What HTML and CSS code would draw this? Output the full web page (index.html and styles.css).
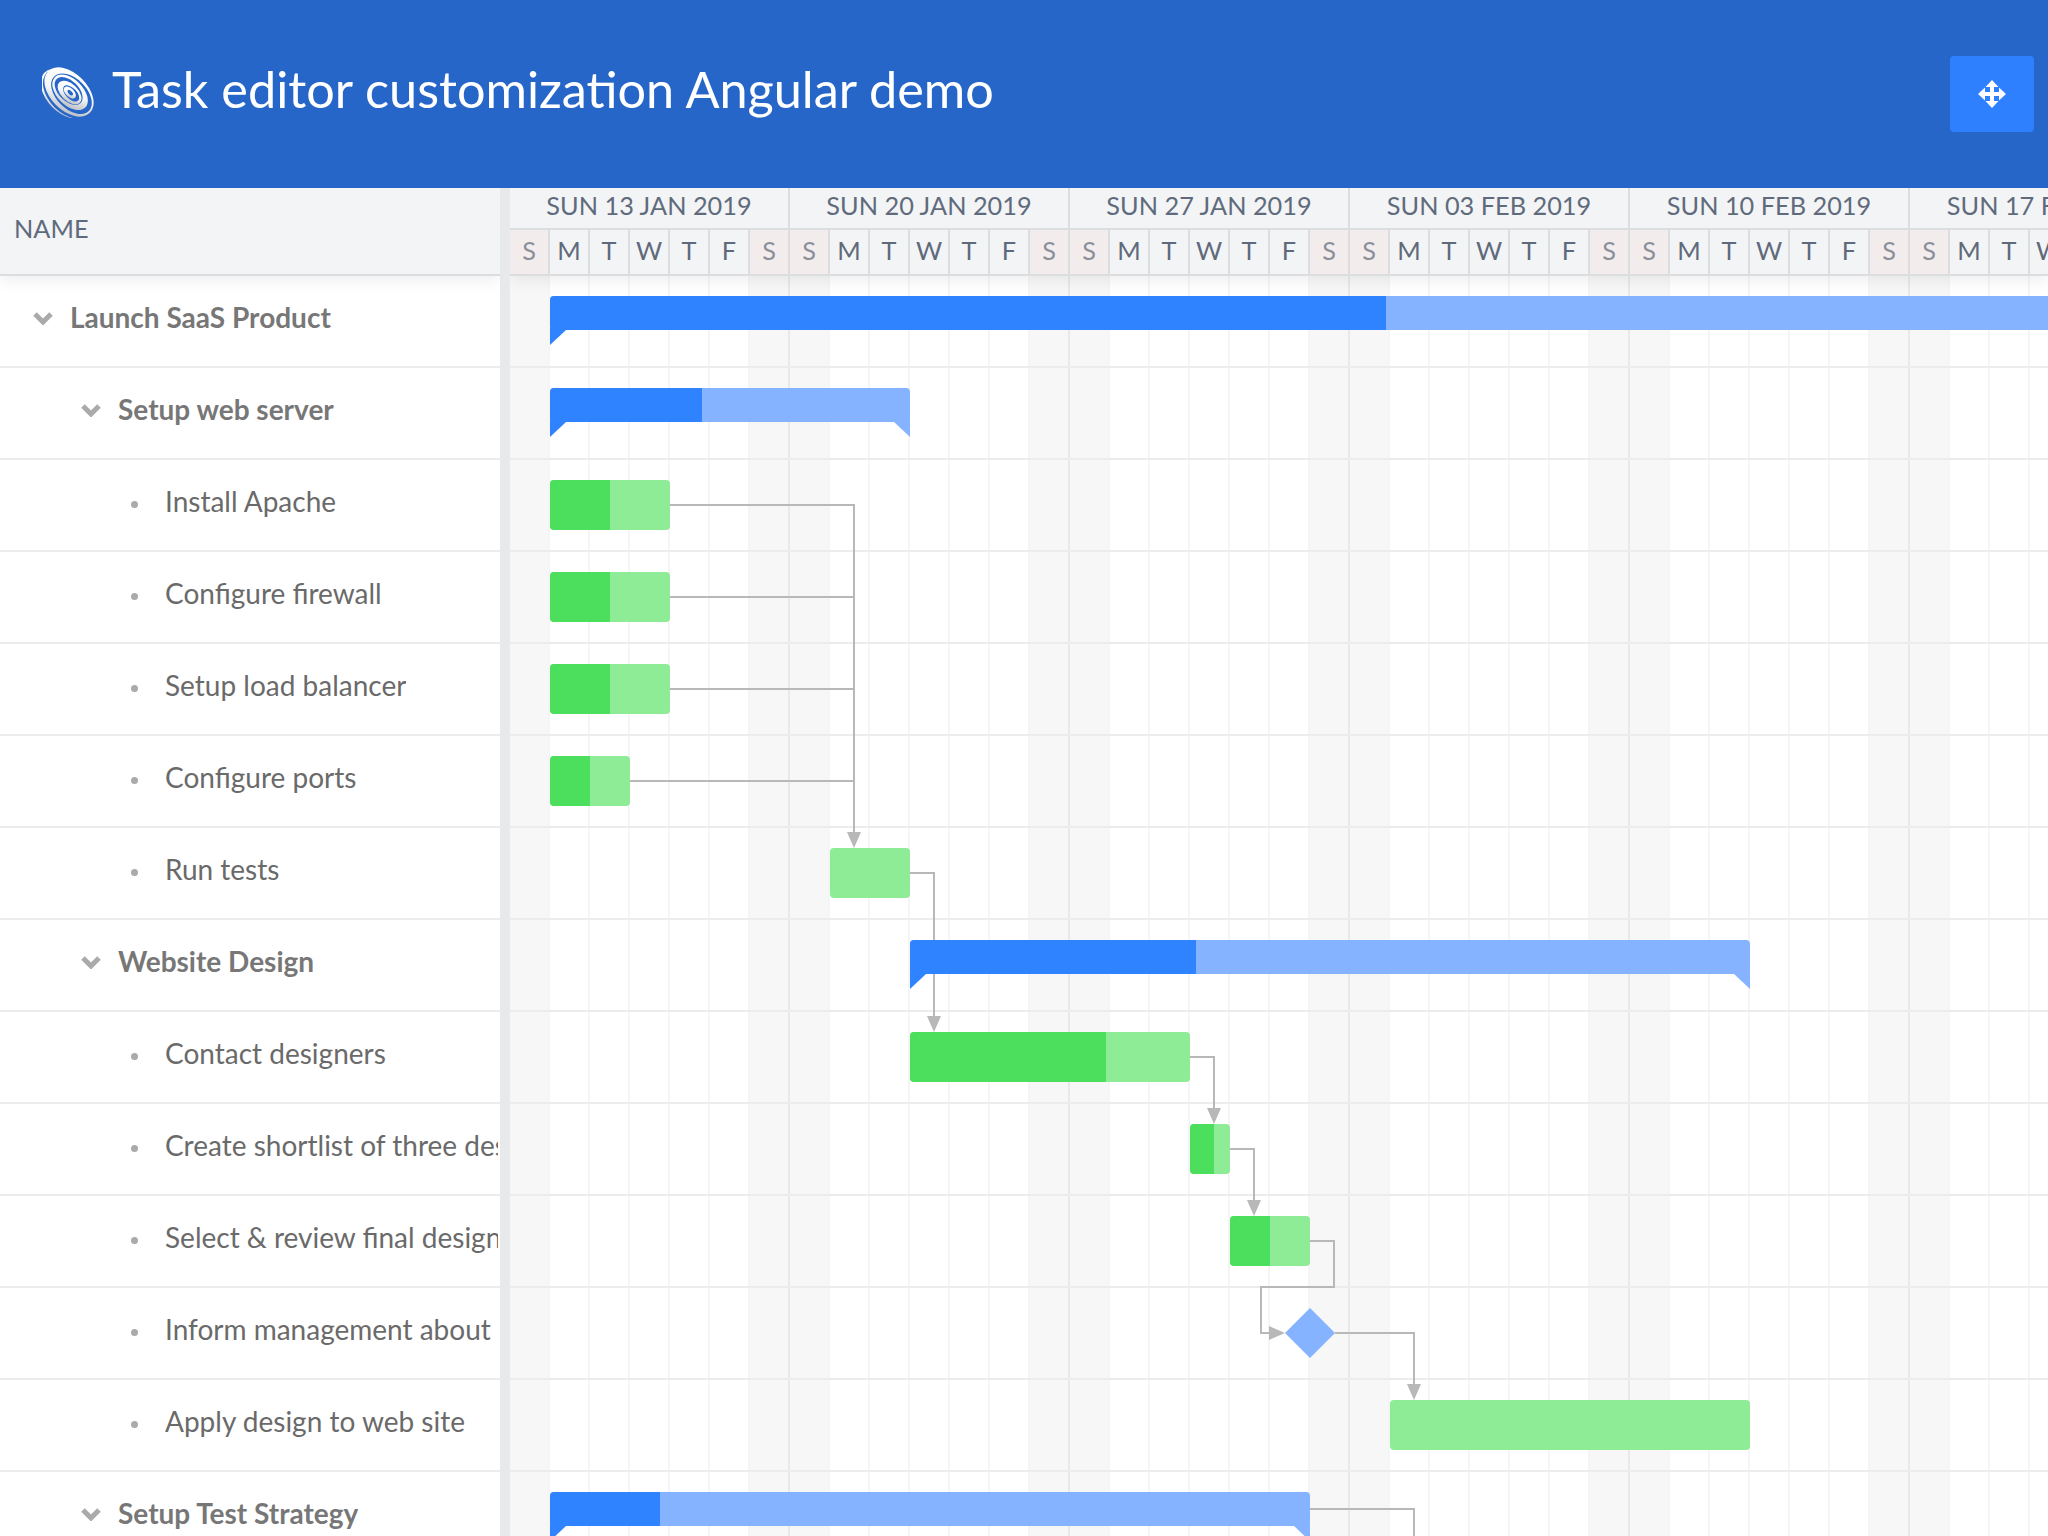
FILE: index.html
```html
<!DOCTYPE html>
<html lang="en">
<head>
<meta charset="utf-8">
<title>Task editor customization Angular demo</title>
<link rel="stylesheet" href="styles.css">
</head>
<body>
<header class="app-header">
  <svg class="logo" viewBox="0 0 54 52" aria-hidden="true">
    <defs>
      <linearGradient id="lg" x1="0.15" y1="0.1" x2="0.8" y2="0.95">
        <stop offset="0" stop-color="#ffffff"/>
        <stop offset="0.55" stop-color="#f4f5f6"/>
        <stop offset="1" stop-color="#b9bcc2"/>
      </linearGradient>
    </defs>
    <g transform="rotate(45 27 26)">
      <ellipse cx="26" cy="29.500" rx="30" ry="19" fill="url(#lg)"/>
      <ellipse cx="27.500" cy="27.500" rx="30" ry="19.500" fill="#2566c8"/>
      <ellipse cx="27" cy="26" rx="29.500" ry="18.500" fill="url(#lg)"/>
      <ellipse cx="30" cy="25.500" rx="24.500" ry="15" fill="#2566c8"/>
      <ellipse cx="28" cy="25.500" rx="21.500" ry="13" fill="url(#lg)"/>
      <ellipse cx="26" cy="25.500" rx="17" ry="10" fill="#2566c8"/>
      <ellipse cx="27.800" cy="26" rx="14.500" ry="8.500" fill="url(#lg)"/>
      <ellipse cx="29.500" cy="25.500" rx="10" ry="5.500" fill="#2566c8"/>
      <ellipse cx="28" cy="25.800" rx="7.500" ry="4.200" fill="url(#lg)"/>
      <ellipse cx="28.400" cy="25.600" rx="3.400" ry="1.800" fill="#2566c8"/>
    </g>
  </svg>
  <h1 class="app-title">Task editor customization Angular demo</h1>
  <button class="move-btn" type="button" aria-label="Move">
    <svg class="move-icon" viewBox="0 0 28 28" aria-hidden="true">
      <path d="M14 0 20.5 7H16V12H21V7.5L28 14 21 20.500V16H16V21H20.500L14 28 7.500 21H12V16H7V20.500L0 14 7 7.500V12H12V7H7.500Z"/>
    </svg>
  </button>
</header>

<main class="gantt">
  <section class="tree">
    <div class="col-head">NAME</div>
    <div class="tree-row level-0"><svg class="chev" viewBox="0 0 22 14"><path d="M3 3 11 11 19 3"/></svg><span class="parent-name">Launch SaaS Product</span></div>
    <div class="tree-row level-1"><svg class="chev" viewBox="0 0 22 14"><path d="M3 3 11 11 19 3"/></svg><span class="parent-name">Setup web server</span></div>
    <div class="tree-row level-2"><i class="dot"></i><span>Install Apache</span></div>
    <div class="tree-row level-2"><i class="dot"></i><span>Configure firewall</span></div>
    <div class="tree-row level-2"><i class="dot"></i><span>Setup load balancer</span></div>
    <div class="tree-row level-2"><i class="dot"></i><span>Configure ports</span></div>
    <div class="tree-row level-2"><i class="dot"></i><span>Run tests</span></div>
    <div class="tree-row level-1"><svg class="chev" viewBox="0 0 22 14"><path d="M3 3 11 11 19 3"/></svg><span class="parent-name">Website Design</span></div>
    <div class="tree-row level-2"><i class="dot"></i><span>Contact designers</span></div>
    <div class="tree-row level-2"><i class="dot"></i><span>Create shortlist of three designers</span></div>
    <div class="tree-row level-2"><i class="dot"></i><span>Select &amp; review final design</span></div>
    <div class="tree-row level-2"><i class="dot"></i><span>Inform management about</span></div>
    <div class="tree-row level-2"><i class="dot"></i><span>Apply design to web site</span></div>
    <div class="tree-row level-1"><svg class="chev" viewBox="0 0 22 14"><path d="M3 3 11 11 19 3"/></svg><span class="parent-name">Setup Test Strategy</span></div>
  </section>

  <div class="splitter"></div>

  <section class="timeline">
    <div class="time-head">
      <div class="weeks">
        <div class="week">SUN 13 JAN 2019</div>
        <div class="week">SUN 20 JAN 2019</div>
        <div class="week">SUN 27 JAN 2019</div>
        <div class="week">SUN 03 FEB 2019</div>
        <div class="week">SUN 10 FEB 2019</div>
        <div class="week">SUN 17 FEB 2019</div>
      </div>
      <div class="days">
        <span class="day off">S</span><span class="day">M</span><span class="day">T</span><span class="day">W</span><span class="day">T</span><span class="day">F</span><span class="day off">S</span>
        <span class="day off">S</span><span class="day">M</span><span class="day">T</span><span class="day">W</span><span class="day">T</span><span class="day">F</span><span class="day off">S</span>
        <span class="day off">S</span><span class="day">M</span><span class="day">T</span><span class="day">W</span><span class="day">T</span><span class="day">F</span><span class="day off">S</span>
        <span class="day off">S</span><span class="day">M</span><span class="day">T</span><span class="day">W</span><span class="day">T</span><span class="day">F</span><span class="day off">S</span>
        <span class="day off">S</span><span class="day">M</span><span class="day">T</span><span class="day">W</span><span class="day">T</span><span class="day">F</span><span class="day off">S</span>
        <span class="day off">S</span><span class="day">M</span><span class="day">T</span><span class="day">W</span><span class="day">T</span><span class="day">F</span><span class="day off">S</span>
      </div>
    </div>

    <div class="time-body">
      <svg class="links" viewBox="510 276 1538 1260" aria-hidden="true">
        <g class="link-lines">
          <path d="M670 505H854V834"/>
          <path d="M670 597H854"/>
          <path d="M670 689H854"/>
          <path d="M630 781H854"/>
          <path d="M910 873H934V1018"/>
          <path d="M1190 1057H1214V1110"/>
          <path d="M1230 1149H1254V1202"/>
          <path d="M1310 1241H1334V1287H1261V1333H1271"/>
          <path d="M1335 1333H1414V1386"/>
          <path d="M1310 1509H1414V1536"/>
        </g>
        <g class="link-heads">
          <path d="M847 832H861L854 848Z"/>
          <path d="M927 1016H941L934 1032Z"/>
          <path d="M1207 1108H1221L1214 1124Z"/>
          <path d="M1247 1200H1261L1254 1216Z"/>
          <path d="M1269 1326V1340L1285 1333Z"/>
          <path d="M1407 1384H1421L1414 1400Z"/>
        </g>
      </svg>

      <div class="bar summary open-end" style="left:40px;top:20px;width:1600px"><div class="done" style="width:836px"></div></div>
      <div class="bar summary" style="left:40px;top:112px;width:360px"><div class="done" style="width:152px"></div></div>
      <div class="bar task" style="left:40px;top:204px;width:120px"><div class="done" style="width:60px"></div></div>
      <div class="bar task" style="left:40px;top:296px;width:120px"><div class="done" style="width:60px"></div></div>
      <div class="bar task" style="left:40px;top:388px;width:120px"><div class="done" style="width:60px"></div></div>
      <div class="bar task" style="left:40px;top:480px;width:80px"><div class="done" style="width:40px"></div></div>
      <div class="bar task" style="left:320px;top:572px;width:80px"></div>
      <div class="bar summary" style="left:400px;top:664px;width:840px"><div class="done" style="width:286px"></div></div>
      <div class="bar task" style="left:400px;top:756px;width:280px"><div class="done" style="width:196px"></div></div>
      <div class="bar task" style="left:680px;top:848px;width:40px"><div class="done" style="width:24px"></div></div>
      <div class="bar task" style="left:720px;top:940px;width:80px"><div class="done" style="width:40px"></div></div>
      <div class="milestone" style="left:775px;top:1032px"></div>
      <div class="bar task" style="left:880px;top:1124px;width:360px"></div>
      <div class="bar summary" style="left:40px;top:1216px;width:760px"><div class="done" style="width:110px"></div></div>
    </div>
  </section>
</main>
</body>
</html>
```
FILE: styles.css
```css
* { box-sizing: border-box; }
html, body { margin: 0; height: 100%; }
body {
  width: 2048px;
  height: 1536px;
  overflow: hidden;
  background: #fff;
  font-family: Lato, "Open Sans", sans-serif;
  font-feature-settings: "liga" 1;
  display: flex;
  flex-direction: column;
}

/* top bar */
.app-header {
  flex: none;
  height: 188px;
  background: #2566c8;
  display: flex;
  align-items: center;
  padding: 0 14px 0 42px;
}
.logo { width: 54px; height: 52px; flex: none; margin-top: -5px; }
.app-title {
  margin: -11px 0 0 16px;
  font-size: 50.4px;
  font-weight: 400;
  color: #fff;
  white-space: nowrap;
  flex: 1;
}
.move-btn {
  width: 84px;
  height: 76px;
  border: 0;
  padding: 0;
  border-radius: 4px;
  background: #2f80ff;
  display: flex;
  align-items: center;
  justify-content: center;
}
.move-icon { width: 28px; height: 28px; fill: #fff; }

/* gantt */
.gantt { flex: 1; display: flex; min-height: 0; }

.tree { flex: none; width: 500px; overflow: hidden; }
.col-head {
  position: relative;
  height: 88px;
  background: #f3f4f6;
  border-bottom: 2px solid #dcdddf;
  box-shadow: 0 6px 14px rgba(0, 0, 0, .06);
  display: flex;
  align-items: center;
  padding: 0 0 6px 14px;
  font-size: 25.3px;
  color: #5f6b7c;
}
.tree-row {
  height: 92px;
  border-bottom: 2px solid #ececec;
  display: flex;
  align-items: center;
  font-size: 28px;
  color: #6a6a6a;
  white-space: nowrap;
  padding: 0 2px 8px 0;
}
.tree-row span { overflow: hidden; }
.level-0 { padding-left: 32px; }
.level-1 { padding-left: 80px; }
.level-2 { padding-left: 127px; }
.parent-name { font-weight: 700; color: #777; }
.chev { flex: none; width: 22px; height: 14px; margin: 2px 16px 0 0; fill: none; stroke: #aaa; stroke-width: 5; }
.dot { flex: none; width: 7px; height: 7px; border-radius: 50%; background: #aaa; margin: 6px 27px 0 4px; }

.splitter { flex: none; width: 10px; background: #e8e9eb; }

.timeline { flex: 1; min-width: 0; overflow: hidden; display: flex; flex-direction: column; }
.time-head {
  position: relative;
  z-index: 2;
  flex: none;
  height: 88px;
  background: #f3f4f6;
  border-bottom: 2px solid #dcdddf;
  box-shadow: 0 6px 14px rgba(0, 0, 0, .06);
}
.weeks { display: flex; height: 42px; border-bottom: 2px solid #dcdddf; }
.week {
  flex: none;
  width: 280px;
  border-right: 2px solid #dcdddf;
  display: flex;
  align-items: center;
  justify-content: center;
  font-size: 25.3px;
  color: #5f6b7c;
  white-space: nowrap;
  padding-bottom: 6px;
}
.days { display: flex; height: 44px; }
.day {
  flex: none;
  width: 40px;
  border-right: 2px solid #dcdddf;
  display: flex;
  align-items: center;
  justify-content: center;
  font-size: 25.3px;
  color: #5f6b7c;
  padding-bottom: 4px;
}
.day.off { background: #f3ecec; color: #8b8f99; }

.time-body {
  position: relative;
  flex: 1;
  background-color: #fff;
  background-image:
    linear-gradient(to bottom, transparent 90px, #ececec 90px),
    linear-gradient(to right, transparent 278px, #e8e8e8 278px),
    linear-gradient(to right, transparent 38px, #f5f5f5 38px),
    linear-gradient(to right, #f7f7f7 40px, transparent 40px, transparent 240px, #f7f7f7 240px);
  background-size: 100% 92px, 280px 100%, 40px 100%, 280px 100%;
}
.links { position: absolute; left: 0; top: 0; width: 1538px; height: 1260px; }
.link-lines path { fill: none; stroke: #b8b8b8; stroke-width: 2; }
.link-heads path { fill: #b8b8b8; }

.bar { position: absolute; overflow: visible; border-radius: 4px; }
.done { height: 100%; border-radius: 4px 0 0 4px; }
.task { height: 50px; background: #8eeb96; }
.task .done { background: #4cdf5e; }
.summary { height: 34px; background: #85b3ff; }
.summary .done { background: #3083ff; }
.summary::before,
.summary::after {
  content: "";
  position: absolute;
  top: 32px;
  width: 16px;
  height: 17px;
}
.summary::before { left: 0; background: #3083ff; clip-path: polygon(0 0, 100% 0, 100% 2px, 0 100%); }
.summary::after { right: 0; background: #85b3ff; clip-path: polygon(0 0, 100% 0, 100% 100%, 0 2px); }
.open-end { border-radius: 4px 0 0 4px; }
.open-end::after { display: none; }
.milestone {
  position: absolute;
  width: 50px;
  height: 50px;
  background: #85b3ff;
  clip-path: polygon(50% 0, 100% 50%, 50% 100%, 0 50%);
}
```
